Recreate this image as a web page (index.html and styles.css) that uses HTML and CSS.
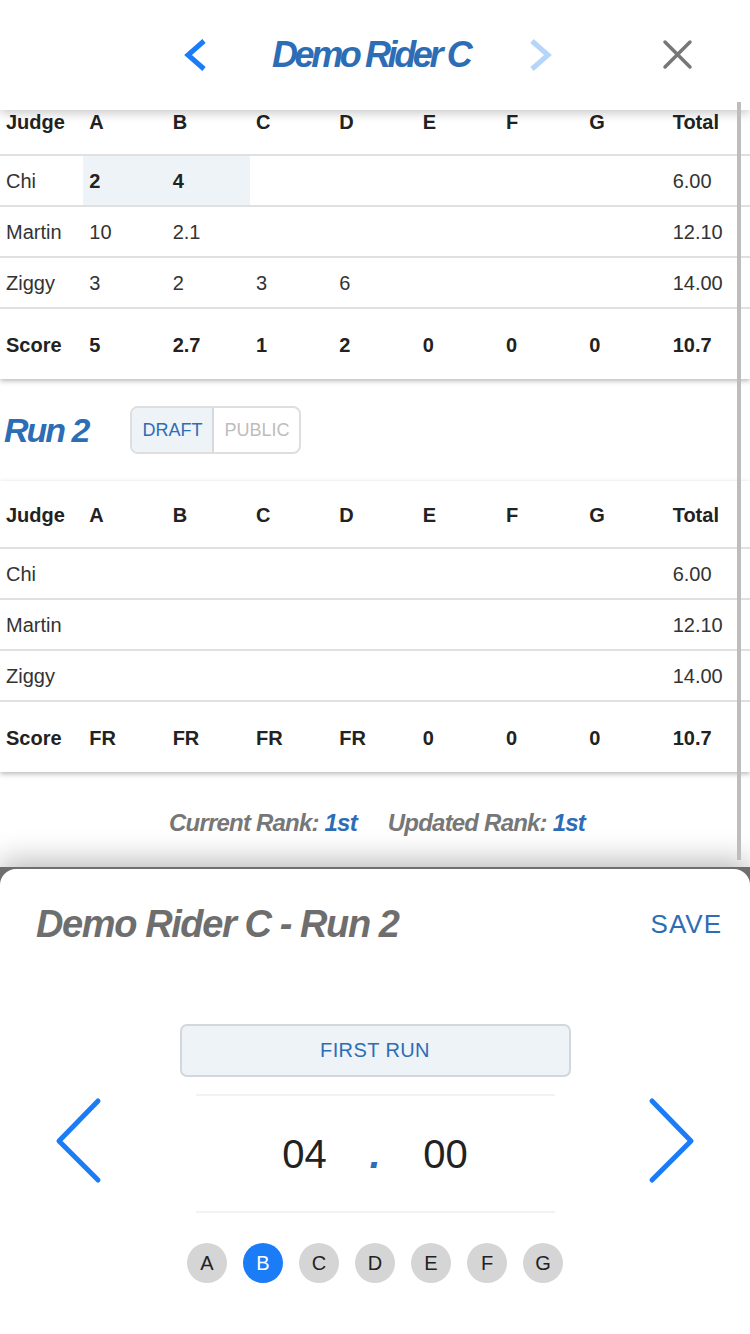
FILE: index.html
```html
<!DOCTYPE html>
<html>
<head>
<meta charset="utf-8">
<link rel="stylesheet" href="styles.css">
</head>
<body>
<div class="app">
  <header class="topbar">
    <svg class="nav-chev" width="30" height="40" viewBox="0 0 30 40"><path d="M24 6 L8 20 L24 34" fill="none" stroke="#1a7cf6" stroke-width="5" stroke-linecap="butt" stroke-linejoin="miter"/></svg>
    <h1 class="rider-title">Demo Rider C</h1>
    <svg class="nav-chev" width="30" height="40" viewBox="0 0 30 40"><path d="M6 6 L22 20 L6 34" fill="none" stroke="#b5d5fb" stroke-width="5" stroke-linecap="butt" stroke-linejoin="miter"/></svg>
    <svg class="close" width="40" height="40" viewBox="0 0 40 40"><path d="M7 7 L32 32 M32 7 L7 32" stroke="#777" stroke-width="3.5" stroke-linecap="round"/></svg>
  </header>

  <main class="content">
    <div class="scores first">
      <div class="row head"><span>Judge</span><span>A</span><span>B</span><span>C</span><span>D</span><span>E</span><span>F</span><span>G</span><span>Total</span></div>
      <div class="row"><span>Chi</span><span class="hl b">2</span><span class="hl b">4</span><span></span><span></span><span></span><span></span><span></span><span>6.00</span></div>
      <div class="row"><span>Martin</span><span>10</span><span>2.1</span><span></span><span></span><span></span><span></span><span></span><span>12.10</span></div>
      <div class="row"><span>Ziggy</span><span>3</span><span>2</span><span>3</span><span>6</span><span></span><span></span><span></span><span>14.00</span></div>
      <div class="row score"><span>Score</span><span>5</span><span>2.7</span><span>1</span><span>2</span><span>0</span><span>0</span><span>0</span><span>10.7</span></div>
    </div>

    <div class="run-head">
      <h2 class="run-title">Run 2</h2>
      <div class="segment">
        <span class="seg on">DRAFT</span>
        <span class="seg">PUBLIC</span>
      </div>
    </div>

    <div class="scores">
      <div class="row head"><span>Judge</span><span>A</span><span>B</span><span>C</span><span>D</span><span>E</span><span>F</span><span>G</span><span>Total</span></div>
      <div class="row"><span>Chi</span><span></span><span></span><span></span><span></span><span></span><span></span><span></span><span>6.00</span></div>
      <div class="row"><span>Martin</span><span></span><span></span><span></span><span></span><span></span><span></span><span></span><span>12.10</span></div>
      <div class="row"><span>Ziggy</span><span></span><span></span><span></span><span></span><span></span><span></span><span></span><span>14.00</span></div>
      <div class="row score"><span>Score</span><span>FR</span><span>FR</span><span>FR</span><span>FR</span><span>0</span><span>0</span><span>0</span><span>10.7</span></div>
    </div>

    <div class="rank">
      <span>Current Rank: <em>1st</em></span>
      <span>Updated Rank: <em>1st</em></span>
    </div>
  </main>

  <div class="scrollbar"></div>

  <section class="sheet-wrap">
    <div class="sheet">
      <div class="sheet-head">
        <h3 class="sheet-title">Demo Rider C - Run 2</h3>
        <span class="save">SAVE</span>
      </div>
      <div class="first-run">FIRST RUN</div>
      <div class="picker-row">
        <svg class="big-chev" width="48" height="90" viewBox="0 0 48 90"><path d="M43 5 L4 45 L43 84" fill="none" stroke="#1a7cf6" stroke-width="5" stroke-linecap="round" stroke-linejoin="round"/></svg>
        <div class="picker">
          <span class="pv">04</span>
          <span class="dot">.</span>
          <span class="pv">00</span>
        </div>
        <svg class="big-chev" width="48" height="90" viewBox="0 0 48 90"><path d="M5 5 L44 45 L5 84" fill="none" stroke="#1a7cf6" stroke-width="5" stroke-linecap="round" stroke-linejoin="round"/></svg>
      </div>
      <div class="letters">
        <span class="lt">A</span>
        <span class="lt sel">B</span>
        <span class="lt">C</span>
        <span class="lt">D</span>
        <span class="lt">E</span>
        <span class="lt">F</span>
        <span class="lt">G</span>
      </div>
    </div>
  </section>
</div>
</body>
</html>
```

FILE: styles.css
```css
* { box-sizing: border-box; }
html, body { margin: 0; padding: 0; background: #fff; }
body {
  font-family: "Liberation Sans", Arial, sans-serif;
  color: #222;
  width: 750px;
  height: 1334px;
  overflow: hidden;
}
.app {
  position: relative;
  width: 750px;
  height: 1334px;
  display: flex;
  flex-direction: column;
}

/* top bar */
.topbar {
  height: 110px;
  flex: 0 0 110px;
  display: flex;
  align-items: center;
  padding: 0 52px 0 180px;
  background: #fff;
  position: relative;
  z-index: 3;
  box-shadow: 0 3px 10px rgba(0,0,0,0.22);
}
.nav-chev { display: block; flex: 0 0 auto; }
.rider-title {
  margin: 0 57px 0 62px;
  font-size: 36px;
  font-weight: 700;
  font-style: italic;
  letter-spacing: -3.4px;
  color: #2d6db5;
  line-height: 40px;
  white-space: nowrap;
}
.close { margin-left: auto; display: block; }

/* content */
.content {
  height: 757px;
  flex: 0 0 757px;
  overflow: hidden;
  position: relative;
  z-index: 1;
}
.scores {
  background: #fff;
  box-shadow: 0 2px 5px rgba(0,0,0,0.28);
}
.scores.first { margin-top: -22px; }
.row {
  display: grid;
  grid-template-columns: repeat(9, 1fr);
  height: 51px;
  border-bottom: 2px solid #e0e0e0;
  font-size: 20px;
  color: #333;
}
.row > span {
  display: flex;
  align-items: center;
  padding-left: 6px;
  padding-top: 2px;
}
.row.head {
  height: 68px;
  font-weight: 700;
  color: #222;
}
.row.score {
  height: 70px;
  border-bottom: none;
  font-weight: 700;
  color: #222;
}
.hl { background: #eef3f8; }
.b { font-weight: 700; color: #222; }

.run-head {
  height: 102px;
  display: flex;
  align-items: center;
  padding-left: 4px;
  gap: 42px;
}
.run-title {
  margin: 0;
  font-size: 34px;
  font-weight: 700;
  font-style: italic;
  letter-spacing: -2px;
  color: #2d6db5;
}
.segment {
  display: flex;
  height: 48px;
  border: 2px solid #dedede;
  border-radius: 8px;
  overflow: hidden;
}
.seg {
  display: flex;
  align-items: center;
  padding: 0 10px;
  font-size: 18px;
  color: #bdbdbd;
}
.seg.on {
  background: #eef3f8;
  color: #2d6db5;
  border-right: 2px solid #d6d9dd;
}

.rank {
  padding-top: 36px;
  display: flex;
  justify-content: center;
  gap: 31px;
  font-size: 24px;
  line-height: 30px;
  font-weight: 700;
  font-style: italic;
  letter-spacing: -0.8px;
  color: #777;
  padding-left: 4px;
}
.rank em { color: #2d6db5; }

.scrollbar {
  position: absolute;
  top: 102px;
  left: 737px;
  width: 4px;
  height: 758px;
  background: #bdbdbd;
  z-index: 4;
}

/* bottom sheet */
.sheet-wrap {
  flex: 1 1 auto;
  background: #6e6e6e;
  padding-top: 2px;
  position: relative;
  z-index: 2;
  box-shadow: 0 -6px 28px rgba(0,0,0,0.28);
}
.sheet {
  background: #fff;
  height: 100%;
  border-radius: 16px 16px 0 0;
  padding-top: 32px;
  display: flex;
  flex-direction: column;
  align-items: center;
}
.sheet-head {
  align-self: stretch;
  display: flex;
  align-items: center;
  justify-content: space-between;
  padding: 0 28px 0 36px;
  height: 46px;
}
.sheet-title {
  margin: 0;
  font-size: 38px;
  font-weight: 700;
  font-style: italic;
  letter-spacing: -1.4px;
  color: #6e6e6e;
}
.save {
  font-size: 26px;
  letter-spacing: 1px;
  color: #2d6db5;
}
.first-run {
  margin-top: 77px;
  width: 391px;
  height: 53px;
  background: #eef3f8;
  border: 2px solid #d3d7dc;
  border-radius: 7px;
  display: flex;
  align-items: center;
  justify-content: center;
  font-size: 20px;
  letter-spacing: 0.4px;
  color: #2d6db5;
}
.picker-row {
  margin-top: 17px;
  align-self: stretch;
  display: flex;
  align-items: center;
  justify-content: space-between;
  padding: 0 55px 0 55px;
}
.big-chev { display: block; margin-top: -26px; }
.picker {
  width: 359px;
  height: 119px;
  border-top: 2px solid #f2f2f2;
  border-bottom: 2px solid #f2f2f2;
  display: grid;
  grid-template-columns: 94px 47px 94px;
  justify-content: center;
  align-items: center;
}
.pv {
  font-size: 40px;
  color: #222;
  text-align: center;
  padding-top: 2px;
}
.dot {
  text-align: center;
  font-size: 40px;
  font-weight: 700;
  font-style: italic;
  color: #2d6db5;
  padding-top: 2px;
}
.letters {
  margin-top: 30px;
  display: flex;
  gap: 16px;
}
.lt {
  width: 40px;
  height: 40px;
  border-radius: 50%;
  background: #d5d5d5;
  display: flex;
  align-items: center;
  justify-content: center;
  font-size: 20px;
  color: #222;
}
.lt.sel { background: #1a7cf6; color: #fff; }
```
